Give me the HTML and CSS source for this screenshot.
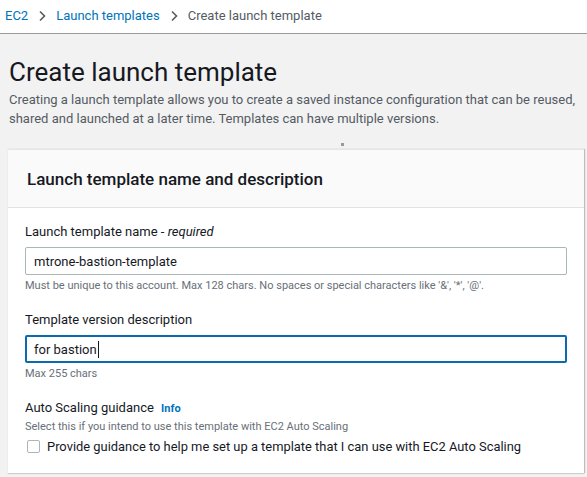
FILE: index.html
```html
<!DOCTYPE html>
<html>
<head>
<meta charset="utf-8">
<link rel="stylesheet" href="styles.css">
</head>
<body>
<nav class="crumbs">
  <a class="crumb-link">EC2</a>
  <svg class="chev" width="10" height="12" viewBox="0 0 10 12"><path d="M3 1.5 L7.5 6 L3 10.5" fill="none" stroke="#545b64" stroke-width="1.6"/></svg>
  <a class="crumb-link">Launch templates</a>
  <svg class="chev" width="10" height="12" viewBox="0 0 10 12"><path d="M3 1.5 L7.5 6 L3 10.5" fill="none" stroke="#545b64" stroke-width="1.6"/></svg>
  <span class="crumb-current">Create launch template</span>
</nav>
<main class="page">
  <h1 class="title">Create launch template</h1>
  <p class="intro">Creating a launch template allows you to create a saved instance configuration that can be reused, shared and launched at a later time. Templates can have multiple versions.</p>
  <div class="dot-row"><span class="dot"></span></div>
  <section class="card">
    <header class="card-head">Launch template name and description</header>
    <div class="card-body">
      <div class="field">
        <label class="label">Launch template name - <em>required</em></label>
        <div class="input">mtrone-bastion-template</div>
        <div class="hint">Must be unique to this account. Max 128 chars. No spaces or special characters like '&amp;', '*', '@'.</div>
      </div>
      <div class="field">
        <label class="label">Template version description</label>
        <div class="input focused">for bastion<span class="caret"></span></div>
        <div class="hint">Max 255 chars</div>
      </div>
      <div class="field last">
        <div class="label">Auto Scaling guidance <span class="info">Info</span></div>
        <div class="hint sub">Select this if you intend to use this template with EC2 Auto Scaling</div>
        <div class="check-row"><span class="box"></span><span class="check-text">Provide guidance to help me set up a template that I can use with EC2 Auto Scaling</span></div>
      </div>
    </div>
  </section>
</main>
</body>
</html>
```
FILE: styles.css
```css
* { box-sizing: border-box; }
html, body { margin: 0; padding: 0; }
body {
  background: #f2f2f2;
  font-family: Roboto, "Liberation Sans", sans-serif;
  color: #16191f;
  width: 587px;
  height: 477px;
  overflow: hidden;
}
.crumbs {
  height: 34px;
  background: #ffffff;
  border-bottom: 1px solid #9a9a9a;
  display: flex;
  align-items: center;
  padding: 0 0 3px 5px;
  font-size: 13px;
}
.crumb-link { color: #0073bb; }
.crumb-current { color: #545b64; }
.chev { margin: 2px 9px 0 9px; }
.page { padding: 0 3px 0 8px; }
.title {
  margin: 21px 0 0 1px;
  font-size: 26px;
  font-weight: 400;
  line-height: 34px;
  color: #16191f;
}
.intro {
  margin: 1px 0 0 1px;
  font-size: 13px;
  line-height: 19px;
  color: #545b64;
}
.dot-row { height: 21px; display: flex; justify-content: center; align-items: flex-end; padding: 0 0 3px 93px; }
.dot { width: 3px; height: 3px; background: #9a9a9a; }
.card {
  background: #ffffff;
  width: 576px;
  height: 324px;
  box-shadow: 1px 0 1px rgba(0,0,0,0.2), 0 1px 1px rgba(0,0,0,0.12);
  border-top: 1px solid #e6e6e6;
}
.card-head {
  height: 58px;
  background: #fafafa;
  border-bottom: 1px solid #e2e2e2;
  padding: 0 0 0 19px;
  display: flex;
  align-items: center;
  font-size: 17px;
  font-weight: 500;
  color: #16191f;
}
.card-body { padding: 13px 17px 0 17px; }
.field { margin-bottom: 16px; }
.field.last { padding-top: 2px; }
.label { font-size: 13px; line-height: 18px; color: #16191f; }
.label em { font-style: italic; }
.input {
  margin-top: 6px;
  height: 28px;
  border: 1px solid #aab7b8;
  border-radius: 2px;
  padding: 0 8px;
  display: flex;
  align-items: center;
  font-size: 13px;
  color: #16191f;
}
.input.focused { border: 2px solid #0a6bae; padding: 0 7px; }
.caret { display: inline-block; width: 1px; height: 17px; background: #16191f; margin-left: 1px; }
.hint { margin-top: 3px; font-size: 11px; line-height: 15px; color: #687078; }
.hint.sub { margin-top: 1px; }
.info { color: #0073bb; font-weight: 700; font-size: 11px; margin-left: 4px; }
.check-row { display: flex; align-items: center; margin-top: 5px; }
.box { width: 13px; height: 13px; border: 1px solid #aab7b8; border-radius: 2px; margin: 0 7px 0 2px; }
.check-text { font-size: 12.9px; color: #16191f; }
```
